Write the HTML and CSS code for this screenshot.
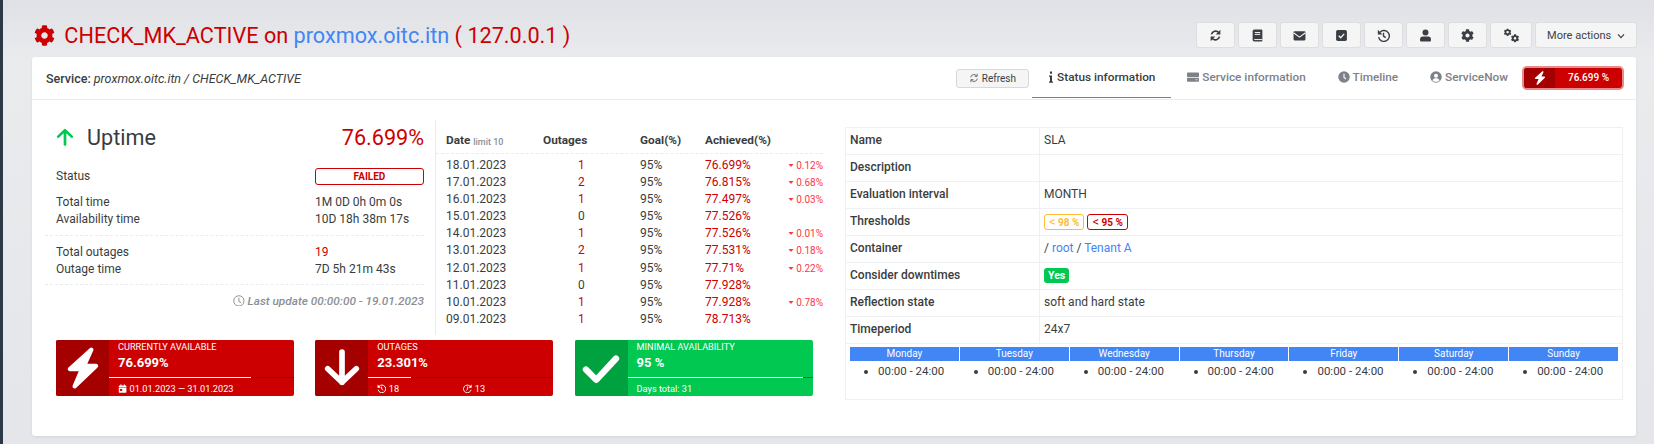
FILE: index.html
```html
<!DOCTYPE html>
<html lang="en">
<head>
    <meta charset="UTF-8">
    <meta name="viewport" content="width=device-width, initial-scale=1.0">
    <title>CHECK_MK_ACTIVE on proxmox.oitc.itn</title>
    <link rel="stylesheet" href="styles.css">
</head>
<body>
    <svg class="icon-defs" aria-hidden="true">
        <symbol id="i-cog" viewBox="0 0 512 512"><path fill="currentColor" d="M487.4 315.7l-42.6-24.6c4.3-23.2 4.3-47 0-70.2l42.6-24.6c4.9-2.8 7.1-8.6 5.5-14-11.1-35.6-30-67.8-54.7-94.6-3.8-4.1-10-5.1-14.8-2.3L380.8 110c-17.9-15.4-38.5-27.3-60.8-35.1V25.8c0-5.6-3.9-10.5-9.4-11.7-36.7-8.2-74.3-7.8-109.2 0-5.5 1.2-9.4 6.1-9.4 11.7V75c-22.2 7.9-42.8 19.8-60.8 35.1L88.7 85.5c-4.9-2.8-11-1.9-14.8 2.3-24.7 26.7-43.6 58.9-54.7 94.6-1.7 5.4.6 11.2 5.5 14L67.3 221c-4.3 23.2-4.3 47 0 70.2l-42.6 24.6c-4.9 2.8-7.1 8.6-5.5 14 11.1 35.6 30 67.8 54.7 94.6 3.8 4.1 10 5.1 14.8 2.3l42.6-24.6c17.9 15.4 38.5 27.3 60.8 35.1v49.2c0 5.6 3.9 10.5 9.4 11.7 36.7 8.2 74.3 7.8 109.2 0 5.5-1.2 9.4-6.1 9.4-11.7v-49.2c22.2-7.9 42.8-19.8 60.8-35.1l42.6 24.6c4.9 2.8 11 1.9 14.8-2.3 24.7-26.7 43.6-58.9 54.7-94.6 1.5-5.5-.7-11.3-5.6-14.1zM256 336c-44.1 0-80-35.9-80-80s35.9-80 80-80 80 35.9 80 80-35.9 80-80 80z"/></symbol>
        <symbol id="i-cogs" viewBox="0 0 24 20"><use href="#i-cog" x="1" y="0" width="11" height="11"/><use href="#i-cog" x="11" y="8" width="12" height="12"/></symbol>
        <symbol id="i-sync" viewBox="0 0 24 24"><g fill="none" stroke="currentColor" stroke-width="3"><path d="M4.500 10A8 8 0 0 1 18 6.500"/><path d="M19.500 14A8 8 0 0 1 6 17.500"/></g><path fill="currentColor" d="M21 1.500V10h-8.500zM3 22.500V14h8.500z"/></symbol>
        <symbol id="i-book" viewBox="0 0 24 24"><path fill="currentColor" d="M6 1h13a2 2 0 0 1 2 2v18a2 2 0 0 1-2 2H6a3 3 0 0 1-3-3V4a3 3 0 0 1 3-3z"/><path fill="none" stroke="#f5f5f5" stroke-width="1.800" d="M7 6.500h10M7 10h10M6 19.500h15"/></symbol>
        <symbol id="i-mail" viewBox="0 0 24 24"><rect fill="currentColor" x="1" y="4" width="22" height="17" rx="2"/><path fill="none" stroke="#f5f5f5" stroke-width="2" d="M1 7l11 8 11-8"/></symbol>
        <symbol id="i-check-square" viewBox="0 0 24 24"><rect fill="currentColor" x="2" y="2" width="20" height="20" rx="3"/><path fill="none" stroke="#f5f5f5" stroke-width="2.500" d="M7 12.500l3.500 3.500L17 9"/></symbol>
        <symbol id="i-history" viewBox="0 0 24 24"><g fill="none" stroke="currentColor" stroke-width="2.600"><path d="M5.500 6A10 10 0 1 1 3 15"/><path d="M12 7v6l4 3"/></g><path fill="currentColor" d="M1.500 1.500l8.500 8.500H1.500z"/></symbol>
        <symbol id="i-user" viewBox="0 0 24 24"><circle fill="currentColor" cx="12" cy="6.500" r="5.500"/><path fill="currentColor" d="M7 14h10a5 5 0 0 1 5 5v2.500a1.500 1.500 0 0 1-1.500 1.500h-17A1.500 1.500 0 0 1 2 21.500V19a5 5 0 0 1 5-5z"/></symbol>
        <symbol id="i-chevron" viewBox="0 0 24 24"><path fill="none" stroke="currentColor" stroke-width="3.500" d="M3 7l9 10 9-10"/></symbol>
        <symbol id="i-refresh" viewBox="0 0 24 24"><g fill="none" stroke="currentColor" stroke-width="1.800"><path d="M4 10.500A8 8 0 0 1 18 6.500"/><path d="M20 13.500A8 8 0 0 1 6 17.500"/><path d="M19.500 2v6h-6M4.500 22v-6h6"/></g></symbol>
        <symbol id="i-info" viewBox="0 0 12 24"><path fill="currentColor" d="M4 1h4v4.500H4zM2 9h6v12h2v2.500H2V21h2v-9.500H2z"/></symbol>
        <symbol id="i-server" viewBox="0 0 24 24"><rect fill="currentColor" x="0" y="3" width="24" height="9" rx="1.500"/><rect fill="currentColor" x="0" y="13.500" width="24" height="8" rx="1.500"/><path fill="none" stroke="#fff" stroke-width="1.500" d="M17 17.500h4"/></symbol>
        <symbol id="i-clock" viewBox="0 0 24 24"><circle fill="currentColor" cx="12" cy="12" r="11.500"/><path fill="none" stroke="#fff" stroke-width="2.200" d="M12 5.500V13l4 3"/></symbol>
        <symbol id="i-user-circle" viewBox="0 0 24 24"><circle fill="currentColor" cx="12" cy="12" r="11.500"/><circle fill="#fff" cx="12" cy="9.500" r="4"/><path fill="#fff" d="M5 19c1-3.500 3.500-4.500 7-4.500s6 1 7 4.500c-2 2-4.500 2.800-7 2.800S7 21 5 19z"/></symbol>
        <symbol id="i-bolt" viewBox="0 0 30 40"><path fill="currentColor" stroke="currentColor" stroke-width="4" stroke-linejoin="round" d="M23 2.500L2.500 21H14L7 37.500 27.500 18H16z"/></symbol>
        <symbol id="i-arrow-up" viewBox="0 0 24 24"><path fill="none" stroke="currentColor" stroke-width="3.600" stroke-linecap="round" stroke-linejoin="round" d="M12 22V3M3 11.500L12 3l9 8.500"/></symbol>
        <symbol id="i-arrow-down" viewBox="0 0 24 24"><path fill="none" stroke="currentColor" stroke-width="3.600" stroke-linecap="round" stroke-linejoin="round" d="M12 2v19M3 12.500l9 8.500 9-8.500"/></symbol>
        <symbol id="i-check" viewBox="0 0 24 24"><path fill="none" stroke="currentColor" stroke-width="4" stroke-linecap="round" stroke-linejoin="round" d="M2.500 13l6.500 6.500L21.500 6"/></symbol>
        <symbol id="i-clock-line" viewBox="0 0 24 24"><g fill="none" stroke="currentColor" stroke-width="2"><circle cx="12" cy="12" r="10.500"/><path d="M12 5.500V13l4.500 3"/></g></symbol>
        <symbol id="i-calendar" viewBox="0 0 24 24"><path fill="currentColor" d="M2 10h20v11a2 2 0 0 1-2 2H4a2 2 0 0 1-2-2zM4 4h2V1h3v3h6V1h3v3h2a2 2 0 0 1 2 2v2.500H2V6a2 2 0 0 1 2-2z"/><rect fill="#c00" x="5" y="13" width="6" height="5"/></symbol>
        <symbol id="i-redo" viewBox="0 0 24 24"><g fill="none" stroke="currentColor" stroke-width="2.400"><path d="M18.500 6A10 10 0 1 0 21 15"/><path d="M12 7v6l-3 4"/></g><path fill="currentColor" d="M22.500 1.500L14 10h8.500z"/></symbol>
        <symbol id="i-caret" viewBox="0 0 12 8"><path fill="currentColor" d="M1 1h10L6 7z"/></symbol>
    </svg>

    <div class="page-head">
        <h1 class="page-title">
            <svg class="title-icon"><use href="#i-cog"/></svg>
            CHECK_MK_ACTIVE on <a href="#">proxmox.oitc.itn</a> ( 127.0.0.1 )
        </h1>
        <div class="toolbar">
            <button class="tool-btn"><svg><use href="#i-sync"/></svg></button>
            <button class="tool-btn"><svg><use href="#i-book"/></svg></button>
            <button class="tool-btn"><svg><use href="#i-mail"/></svg></button>
            <button class="tool-btn"><svg><use href="#i-check-square"/></svg></button>
            <button class="tool-btn"><svg><use href="#i-history"/></svg></button>
            <button class="tool-btn"><svg><use href="#i-user"/></svg></button>
            <button class="tool-btn"><svg><use href="#i-cog"/></svg></button>
            <button class="tool-btn wide"><svg><use href="#i-cogs"/></svg></button>
            <button class="tool-btn more">More actions <svg><use href="#i-chevron"/></svg></button>
        </div>
    </div>

    <div class="card">
        <div class="card-head">
            <div class="service-name"><b>Service:</b> <i>proxmox.oitc.itn / CHECK_MK_ACTIVE</i></div>
            <button class="refresh-btn"><svg><use href="#i-refresh"/></svg> Refresh</button>
            <nav class="tabs">
                <a class="tab active" href="#"><svg class="info"><use href="#i-info"/></svg> Status information</a>
                <a class="tab" href="#"><svg><use href="#i-server"/></svg> Service information</a>
                <a class="tab" href="#"><svg><use href="#i-clock"/></svg> Timeline</a>
                <a class="tab" href="#"><svg><use href="#i-user-circle"/></svg> ServiceNow</a>
            </nav>
            <div class="state-badge">
                <span class="state-icon"><svg><use href="#i-bolt"/></svg></span>
                <span class="state-value">76.699 %</span>
            </div>
        </div>

        <div class="card-body">
            <div class="report">
                <div class="report-top">
                    <section class="summary">
                        <div class="uptime-row">
                            <svg class="uptime-arrow"><use href="#i-arrow-up"/></svg>
                            <span class="uptime-label">Uptime</span>
                            <span class="uptime-value">76.699%</span>
                        </div>
                        <div class="info-row status-row">
                            <span>Status</span>
                            <span class="failed-badge">FAILED</span>
                        </div>
                        <div class="info-group">
                            <div class="info-row"><span>Total time</span><span>1M 0D 0h 0m 0s</span></div>
                            <div class="info-row"><span>Availability time</span><span>10D 18h 38m 17s</span></div>
                        </div>
                        <div class="info-group">
                            <div class="info-row"><span>Total outages</span><span class="red">19</span></div>
                            <div class="info-row"><span>Outage time</span><span>7D 5h 21m 43s</span></div>
                        </div>
                        <div class="last-update"><svg><use href="#i-clock-line"/></svg> Last update 00:00:00 - 19.01.2023</div>
                    </section>

                    <section class="history">
                        <div class="history-row history-head">
                            <span>Date <small>limit 10</small></span><span>Outages</span><span>Goal(%)</span><span>Achieved(%)</span><span></span>
                        </div>
                        <div class="history-row"><span>18.01.2023</span><span class="count red">1</span><span>95%</span><span class="red">76.699%</span><span class="diff"><svg><use href="#i-caret"/></svg> 0.12%</span></div>
                        <div class="history-row"><span>17.01.2023</span><span class="count red">2</span><span>95%</span><span class="red">76.815%</span><span class="diff"><svg><use href="#i-caret"/></svg> 0.68%</span></div>
                        <div class="history-row"><span>16.01.2023</span><span class="count red">1</span><span>95%</span><span class="red">77.497%</span><span class="diff"><svg><use href="#i-caret"/></svg> 0.03%</span></div>
                        <div class="history-row"><span>15.01.2023</span><span class="count">0</span><span>95%</span><span class="red">77.526%</span><span></span></div>
                        <div class="history-row"><span>14.01.2023</span><span class="count red">1</span><span>95%</span><span class="red">77.526%</span><span class="diff"><svg><use href="#i-caret"/></svg> 0.01%</span></div>
                        <div class="history-row"><span>13.01.2023</span><span class="count red">2</span><span>95%</span><span class="red">77.531%</span><span class="diff"><svg><use href="#i-caret"/></svg> 0.18%</span></div>
                        <div class="history-row"><span>12.01.2023</span><span class="count red">1</span><span>95%</span><span class="red">77.71%</span><span class="diff"><svg><use href="#i-caret"/></svg> 0.22%</span></div>
                        <div class="history-row"><span>11.01.2023</span><span class="count">0</span><span>95%</span><span class="red">77.928%</span><span></span></div>
                        <div class="history-row"><span>10.01.2023</span><span class="count red">1</span><span>95%</span><span class="red">77.928%</span><span class="diff"><svg><use href="#i-caret"/></svg> 0.78%</span></div>
                        <div class="history-row"><span>09.01.2023</span><span class="count red">1</span><span>95%</span><span class="red">78.713%</span><span></span></div>
                    </section>
                </div>

                <div class="tiles">
                    <div class="tile">
                        <div class="tile-icon"><svg><use href="#i-bolt"/></svg></div>
                        <div class="tile-main">
                            <div class="tile-title">CURRENTLY AVAILABLE</div>
                            <div class="tile-value">76.699%</div>
                            <div class="tile-bar"><div class="tile-fill" style="width: 76.7%"></div></div>
                            <div class="tile-foot"><span><svg><use href="#i-calendar"/></svg> 01.01.2023 — 31.01.2023</span></div>
                        </div>
                    </div>
                    <div class="tile">
                        <div class="tile-icon"><svg><use href="#i-arrow-down"/></svg></div>
                        <div class="tile-main">
                            <div class="tile-title">OUTAGES</div>
                            <div class="tile-value">23.301%</div>
                            <div class="tile-bar"><div class="tile-fill" style="width: 23.3%"></div></div>
                            <div class="tile-foot split"><span><svg><use href="#i-history"/></svg> 18</span><span><svg><use href="#i-redo"/></svg> 13</span></div>
                        </div>
                    </div>
                    <div class="tile green">
                        <div class="tile-icon"><svg><use href="#i-check"/></svg></div>
                        <div class="tile-main">
                            <div class="tile-title">MINIMAL AVAILABILITY</div>
                            <div class="tile-value">95 %</div>
                            <div class="tile-bar"><div class="tile-fill" style="width: 95%"></div></div>
                            <div class="tile-foot"><span>Days total: 31</span></div>
                        </div>
                    </div>
                </div>
            </div>

            <table class="details">
                <tr><th>Name</th><td>SLA</td></tr>
                <tr><th>Description</th><td></td></tr>
                <tr><th>Evaluation interval</th><td>MONTH</td></tr>
                <tr><th>Thresholds</th><td><span class="limit orange"><span class="lt">&lt;</span> 98 %</span> <span class="limit"><span class="lt">&lt;</span> 95 %</span></td></tr>
                <tr><th>Container</th><td>/ <a href="#">root</a> / <a href="#">Tenant A</a></td></tr>
                <tr><th>Consider downtimes</th><td><span class="yes">Yes</span></td></tr>
                <tr><th>Reflection state</th><td>soft and hard state</td></tr>
                <tr><th>Timeperiod</th><td>24x7</td></tr>
                <tr>
                    <td class="week-cell" colspan="2">
                        <div class="week">
                            <div class="day"><div class="day-name">Monday</div><ul><li>00:00 - 24:00</li></ul></div>
                            <div class="day"><div class="day-name">Tuesday</div><ul><li>00:00 - 24:00</li></ul></div>
                            <div class="day"><div class="day-name">Wednesday</div><ul><li>00:00 - 24:00</li></ul></div>
                            <div class="day"><div class="day-name">Thursday</div><ul><li>00:00 - 24:00</li></ul></div>
                            <div class="day"><div class="day-name">Friday</div><ul><li>00:00 - 24:00</li></ul></div>
                            <div class="day"><div class="day-name">Saturday</div><ul><li>00:00 - 24:00</li></ul></div>
                            <div class="day"><div class="day-name">Sunday</div><ul><li>00:00 - 24:00</li></ul></div>
                        </div>
                    </td>
                </tr>
            </table>
        </div>
    </div>
</body>
</html>
```

FILE: styles.css
```css
* {
    box-sizing: border-box;
}
html, body {
    height: 444px;
    overflow: hidden;
}
body {
    margin: 0;
    padding: 0 18px 0 32px;
    font-family: Roboto, sans-serif;
    font-size: 12px;
    line-height: 17px;
    color: #3a3d40;
    background: linear-gradient(#dfe1e6 0, #e9ebed 60px, #e4e6ea 100%);
    box-shadow: inset 3px 0 0 #2b3a46;
}
a {
    color: #4285f4;
    text-decoration: none;
}
svg {
    width: 1em;
    height: 1em;
    vertical-align: -0.125em;
}
.icon-defs {
    display: none;
}
.red {
    color: #c00;
}

.page-head {
    display: flex;
    justify-content: space-between;
    height: 57px;
    padding-top: 22px;
}
.page-title {
    margin: 2px 0 0 2px;
    font-size: 21.650px;
    font-weight: 400;
    line-height: 24px;
    color: #c00;
}
.title-icon {
    width: 21px;
    height: 21px;
    margin-right: 4px;
    vertical-align: -3px;
}
.toolbar {
    display: flex;
    gap: 3px;
    margin-right: -1px;
}
.tool-btn {
    width: 39px;
    height: 26px;
    padding: 0;
    border: 1px solid #dcdee0;
    border-radius: 3px;
    background: #f5f5f5;
    color: #3b3f44;
    font: 400 11px Roboto, sans-serif;
}
.tool-btn svg {
    width: 13px;
    height: 13px;
    vertical-align: middle;
}
.tool-btn.wide {
    width: 42px;
}
.tool-btn.wide svg {
    width: 17px;
    height: 15px;
}
.tool-btn.more {
    width: 102px;
}
.tool-btn.more svg {
    width: 8px;
    height: 8px;
    margin-left: 3px;
}

.card {
    height: 379px;
    background: #fff;
    border-radius: 3px;
    box-shadow: 0 1px 3px rgba(0,0,0,0.08);
}
.card-head {
    display: flex;
    align-items: center;
    height: 43px;
    padding: 0 14px 0 14px;
    border-bottom: 1px solid #e9ecef;
}
.service-name {
    flex: 1;
    font-size: 12.500px;
}
.service-name b {
    font-weight: 500;
}
.refresh-btn {
    width: 73px;
    height: 19px;
    padding: 0;
    border: 1px solid #d6d8da;
    border-radius: 3px;
    background: #f5f5f5;
    color: #3b3f44;
    font: 400 10px Roboto, sans-serif;
}
.tabs {
    display: flex;
    align-self: stretch;
    margin-left: 3px;
}
.tab {
    display: block;
    padding: 0 16px;
    line-height: 41px;
    height: 41px;
    font-size: 11.800px;
    font-weight: 500;
    color: #7c8288;
}
.tab svg {
    width: 12px;
    height: 12px;
    vertical-align: -2px;
}
.tab .info {
    width: 6px;
}
.tab.active {
    color: #3a3d40;
    border-bottom: 1px solid #4285f4;
}
.state-badge {
    display: flex;
    width: 98px;
    height: 20px;
    border-radius: 3px;
    background: #c00;
    color: #fff;
    font-size: 10px;
    font-weight: 500;
    line-height: 20px;
    box-shadow: 0 0 0 2px #e98a8a;
}
.state-icon {
    width: 31px;
    background: #a50000;
    text-align: center;
    border-radius: 3px 0 0 3px;
    font-size: 14px;
}
.state-value {
    flex: 1;
    text-align: center;
}

.card-body {
    display: flex;
    justify-content: space-between;
    padding: 20px 13px 0 24px;
}
.report {
    width: 767px;
}
.report-top {
    display: flex;
    height: 215px;
}
.summary {
    width: 368px;
    margin-right: 11px;
}
.uptime-row {
    display: flex;
    align-items: center;
    height: 34px;
}
.uptime-arrow {
    width: 18px;
    height: 20px;
    color: #00c851;
}
.uptime-label {
    flex: 1;
    margin-left: 13px;
    font-size: 21.600px;
}
.uptime-value {
    font-size: 21.600px;
    color: #c00;
}
.info-row {
    display: grid;
    grid-template-columns: 259px 1fr;
}
.status-row {
    margin-top: 14px;
    margin-bottom: 9px;
}
.failed-badge {
    height: 17px;
    border: 1px solid #c00;
    border-radius: 3px;
    font-size: 10px;
    font-weight: 700;
    line-height: 15px;
    text-align: center;
    color: #c00;
}
.info-group {
    margin-left: -11px;
    padding: 0 0 7px 11px;
    border-bottom: 1px dashed #e9ecef;
}
.info-group + .info-group {
    padding-top: 8px;
    padding-bottom: 6px;
}
.last-update {
    margin-top: 8px;
    text-align: right;
    font-size: 11.800px;
    font-style: italic;
    font-weight: 500;
    color: #8a8f94;
}

.history {
    width: 388px;
    padding: 0 0 0 10px;
    border-left: 1px solid #e9ecef;
}
.history-row {
    display: grid;
    grid-template-columns: 97px 97px 65px 1fr auto;
    height: 17.100px;
    line-height: 17px;
}
.history-head {
    height: 34px;
    margin: 0 0 3px -10px;
    padding: 12px 0 0 10px;
    font-size: 11.800px;
    font-weight: 700;
    border-bottom: 1px dashed #e9ecef;
}
.history-head small {
    font-size: 9px;
    font-weight: 500;
    color: #8a8f94;
    vertical-align: -1px;
}
.count {
    padding-left: 35px;
}
.diff {
    font-size: 10px;
    color: #ff3547;
}
.diff svg {
    width: 6px;
    height: 5px;
    vertical-align: 1px;
}

.tiles {
    display: flex;
    gap: 21.300px;
    margin-top: 5px;
}
.tile {
    display: flex;
    width: 238px;
    height: 56px;
    background: #c00;
    border-radius: 2px;
    color: #fff;
    overflow: hidden;
}
.tile-icon {
    display: flex;
    align-items: center;
    justify-content: center;
    width: 53px;
    background: #a50000;
    font-size: 38px;
}
.tile:first-child .tile-icon {
    font-size: 42px;
}
.tile-main {
    flex: 1;
}
.tile-title {
    height: 14px;
    padding-left: 9px;
    font-size: 9.200px;
    line-height: 14px;
}
.tile-value {
    height: 23px;
    padding-left: 9px;
    font-size: 13px;
    font-weight: 700;
    line-height: 18px;
}
.tile-bar {
    height: 1px;
    background: #920000;
}
.tile-fill {
    height: 1px;
    background: #fff;
}
.tile-foot {
    display: flex;
    padding-left: 9px;
    font-size: 9.200px;
    line-height: 21px;
}
.tile-foot.split span {
    width: 86px;
}
.green {
    background: #00c851;
}
.green .tile-icon {
    background: #00a13f;
}
.green .tile-bar {
    background: #007e33;
}

.details {
    width: 778px;
    height: 271px;
    margin-top: 6.500px;
    border-collapse: collapse;
}
.details th, .details td {
    height: 27px;
    padding: 0 4px;
    border: 1px solid #eef0f3;
    text-align: left;
    font-size: 12px;
}
.details th {
    width: 194px;
    font-weight: 500;
}
.limit {
    display: inline-block;
    height: 16px;
    padding: 0 4px;
    border: 1px solid #c00;
    border-radius: 3px;
    font-size: 10px;
    font-weight: 700;
    line-height: 14px;
    vertical-align: middle;
    color: #c00;
}
.lt {
    font-size: 13px;
    font-weight: 400;
}
.limit.orange {
    border-color: #fb3;
    color: #fb3;
}
.yes {
    display: inline-block;
    padding: 0 4px;
    border-radius: 3px;
    background: #00c851;
    color: #fff;
    font-size: 10.500px;
    font-weight: 700;
    line-height: 15px;
    vertical-align: middle;
}
.details .week-cell {
    height: 56px;
    padding: 3px 4px 0;
    vertical-align: top;
}
.week {
    display: grid;
    grid-template-columns: repeat(7, 1fr);
    gap: 1px;
}
.day-name {
    height: 14px;
    background: #4285f4;
    color: #fff;
    font-size: 10px;
    line-height: 14px;
    text-align: center;
}
.day ul {
    margin: 2px 0 0;
    padding-left: 28px;
    font-size: 11.500px;
}
```
